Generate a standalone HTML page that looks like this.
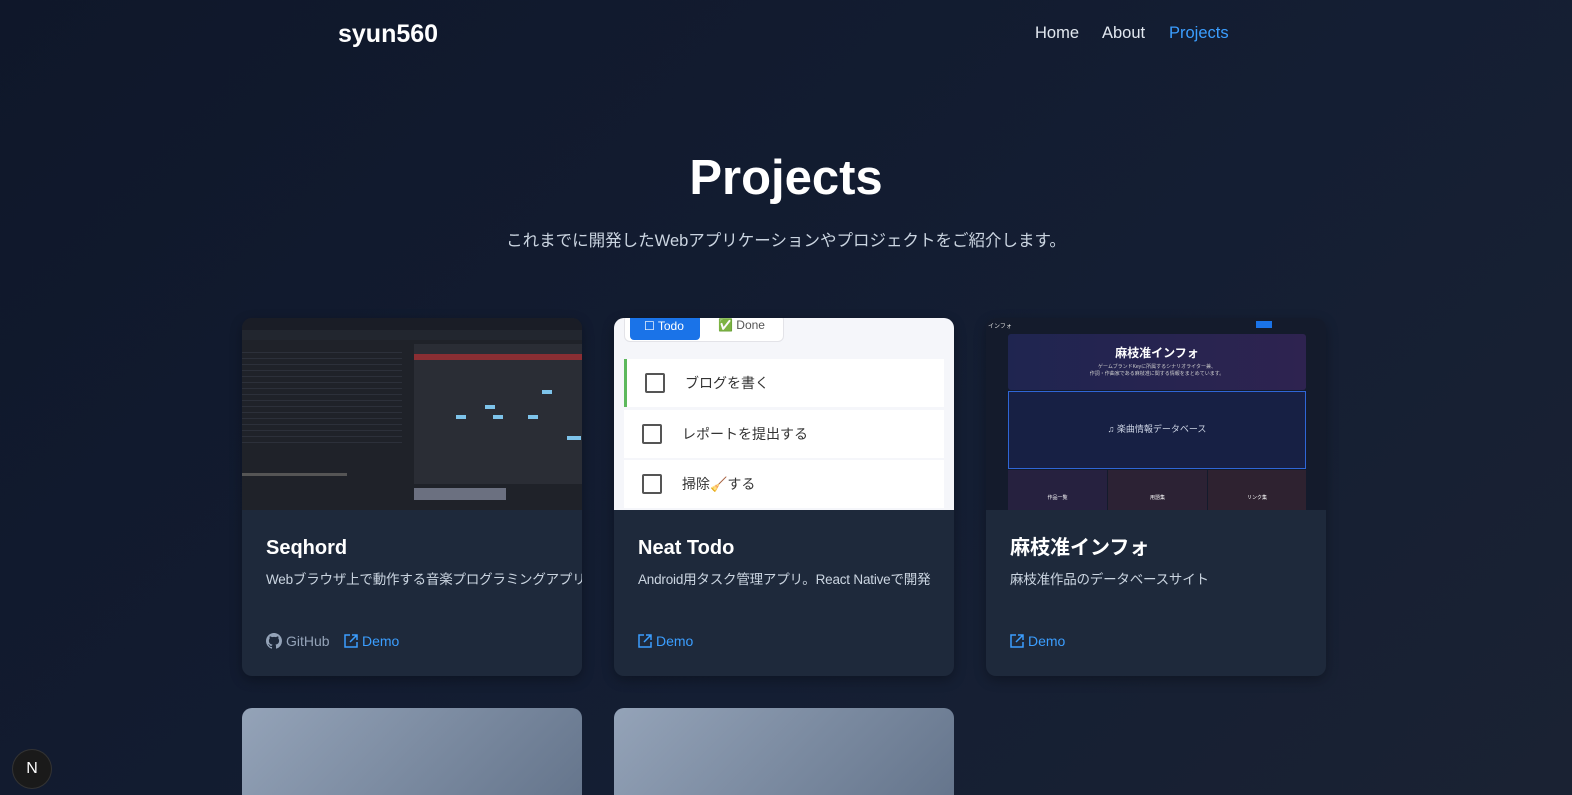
<!DOCTYPE html>
<html><head><meta charset="utf-8"><style>
*{margin:0;padding:0;box-sizing:border-box}
html,body{width:1572px;height:795px;overflow:hidden}
body{background:linear-gradient(135deg,#0f172a 0%,#141e33 60%,#1a2233 100%);font-family:"Liberation Sans","Noto Sans CJK JP",sans-serif;color:#fff;position:relative}
.logo{position:absolute;left:338px;top:20px;font-size:25px;font-weight:bold}
.nav{position:absolute;top:24px;font-size:16.5px;color:#e2e8f0}
h1{position:absolute;left:0;width:1572px;text-align:center;top:150px;font-size:49px;font-weight:bold}
.sub{position:absolute;left:0;width:1572px;text-align:center;top:229px;font-size:16.5px;color:#cbd5e1;line-height:24px}
.card{position:absolute;width:340px;height:358px;top:318px;background:#1e293b;border-radius:10px;overflow:hidden;box-shadow:0 4px 12px rgba(0,0,0,.3)}
.img{height:192px;position:relative;overflow:hidden}
.ct{position:absolute;left:24px;top:217px;font-size:20px;font-weight:bold;line-height:26px}
.cd{position:absolute;left:24px;top:252px;font-size:13.5px;color:#cbd5e1;white-space:nowrap;line-height:20px;letter-spacing:-0.2px}
.lk{position:absolute;top:315px;font-size:14px;color:#3b9eff;display:flex;align-items:center;gap:4px}
.gh{color:#94a3b8}
.card2{position:absolute;top:708px;width:340px;height:100px;border-radius:10px;background:linear-gradient(135deg,#94a3b8,#64748b)}
.todo-row{position:absolute;left:10px;right:10px;height:48px;background:#fff;display:flex;align-items:center;font-size:14px;color:#333}
.cb{width:20px;height:20px;border:2px solid #555;border-radius:2px;margin-left:18px;margin-right:20px}
</style></head><body>
<div class="logo">syun560</div>
<div class="nav" style="left:1035px">Home</div>
<div class="nav" style="left:1102px">About</div>
<div class="nav" style="left:1169px;color:#3b9eff">Projects</div>
<h1>Projects</h1>
<div class="sub">これまでに開発したWebアプリケーションやプロジェクトをご紹介します。</div>

<div class="card" style="left:242px">
 <div class="img" style="background:#1f2229">
  <div style="position:absolute;left:0;top:0;width:341px;height:12px;background:#1a1d26"></div>
  <div style="position:absolute;left:0;top:12px;width:341px;height:10px;background:#22262f"></div>
  <div style="position:absolute;left:172px;top:26px;width:169px;height:140px;background:#2a2d35"></div>
  <div style="position:absolute;left:172px;top:36px;width:169px;height:6px;background:#8a2e33"></div>
  <div style="position:absolute;left:172px;top:170px;width:92px;height:12px;background:#6b7080"></div>
  <div style="position:absolute;left:0;top:155px;width:105px;height:3px;background:#555"></div>
  <div style="position:absolute;left:0;top:30px;width:160px;height:100px;background:repeating-linear-gradient(#1f2229 0 4px,#3a3f4a 4px 5px,#1f2229 5px 6px);opacity:.5"></div>
  <div style="position:absolute;left:214px;top:97px;width:10px;height:4px;background:#7dc3ea"></div>
  <div style="position:absolute;left:251px;top:97px;width:10px;height:4px;background:#7dc3ea"></div>
  <div style="position:absolute;left:286px;top:97px;width:10px;height:4px;background:#7dc3ea"></div>
  <div style="position:absolute;left:300px;top:72px;width:10px;height:4px;background:#7dc3ea"></div>
  <div style="position:absolute;left:243px;top:87px;width:10px;height:4px;background:#7dc3ea"></div>
  <div style="position:absolute;left:325px;top:118px;width:14px;height:4px;background:#7dc3ea"></div>
 </div>
 <div class="ct">Seqhord</div>
 <div class="cd">Webブラウザ上で動作する音楽プログラミングアプリ</div>
 <div class="lk gh" style="left:24px"><svg width="16" height="16" viewBox="0 0 16 16" fill="#94a3b8"><path d="M8 0C3.58 0 0 3.58 0 8c0 3.54 2.29 6.530 5.47 7.59.4.07.55-.17.55-.38v-1.33c-2.23.48-2.7-1.07-2.7-1.07-.36-.92-.89-1.170-.89-1.17-.73-.5.05-.49.05-.49.8.06 1.23.83 1.23.83.71 1.22 1.87.87 2.33.66.07-.52.28-.87.5-1.07-1.78-.2-3.64-.89-3.640-3.950 0-.87.31-1.59.82-2.15-.08-.2-.36-1.02.08-2.12 0 0 .67-.21 2.2.82a7.6 7.6 0 0 1 4 0c1.53-1.04 2.2-.82 2.2-.82.44 1.1.16 1.92.08 2.12.51.56.82 1.27.82 2.15 0 3.07-1.87 3.75-3.65 3.95.29.25.54.73.54 1.48v2.2c0 .21.15.46.55.38A8 8 0 0 0 16 8c0-4.42-3.58-8-8-8z"/></svg>GitHub</div>
 <div class="lk" style="left:102px"><svg width="14" height="14" viewBox="0 0 14 14" fill="none" stroke="#3b9eff" stroke-width="1.5"><path d="M6 1H1v12h12V8M8 1h5v5M13 1L6 8"/></svg>Demo</div>
</div>

<div class="card" style="left:614px">
 <div class="img" style="background:#f5f6fa">
  <div style="position:absolute;left:10px;top:-4px;width:160px;height:28px;background:#fff;border:1px solid #e3e3e8;border-radius:6px"></div>
  <div style="position:absolute;left:16px;top:-4px;width:70px;height:26px;background:#1a73e8;border-radius:4px;color:#fff;font-size:12px;padding:5px 0 0 14px">☐ Todo</div>
  <div style="position:absolute;left:104px;top:0;font-size:12px;color:#555">✅ Done</div>
  <div class="todo-row" style="top:41px;border-left:3px solid #5cb85c"><div class="cb"></div>ブログを書く</div>
  <div class="todo-row" style="top:92px"><div class="cb"></div>レポートを提出する</div>
  <div class="todo-row" style="top:142px"><div class="cb"></div>掃除🧹する</div>
 </div>
 <div class="ct">Neat Todo</div>
 <div class="cd">Android用タスク管理アプリ。React Nativeで開発</div>
 <div class="lk" style="left:24px"><svg width="14" height="14" viewBox="0 0 14 14" fill="none" stroke="#3b9eff" stroke-width="1.5"><path d="M6 1H1v12h12V8M8 1h5v5M13 1L6 8"/></svg>Demo</div>
</div>

<div class="card" style="left:986px">
 <div class="img" style="background:#141b2c">
  <div style="position:absolute;left:2px;top:3px;font-size:6px;color:#ddd">インフォ</div>
  <div style="position:absolute;left:270px;top:3px;width:16px;height:7px;background:#1a73e8"></div>
  <div style="position:absolute;left:22px;top:16px;width:298px;height:56px;background:linear-gradient(90deg,#1f2550,#2e2350);border-radius:3px"></div>
  <div style="position:absolute;left:22px;top:26px;width:298px;text-align:center;font-size:12px;font-weight:bold">麻枝准インフォ</div>
  <div style="position:absolute;left:22px;top:46px;width:298px;text-align:center;font-size:5px;color:#ccc;line-height:7px">ゲームブランドKeyに所属するシナリオライター兼、<br>作詞・作曲家である麻枝准に関する情報をまとめています。</div>
  <div style="position:absolute;left:22px;top:73px;width:298px;height:78px;background:#172044;border:1px solid #2f66d6"></div>
  <div style="position:absolute;left:22px;top:104px;width:298px;text-align:center;font-size:9px;color:#cfd6e6">♫ 楽曲情報データベース</div>
  <div style="position:absolute;left:22px;top:152px;width:99px;height:40px;background:#26213f;font-size:5px;text-align:center;padding-top:24px">作品一覧</div>
  <div style="position:absolute;left:122px;top:152px;width:99px;height:40px;background:#2c2234;font-size:5px;text-align:center;padding-top:24px">用語集</div>
  <div style="position:absolute;left:222px;top:152px;width:98px;height:40px;background:#2e2230;font-size:5px;text-align:center;padding-top:24px">リンク集</div>
 </div>
 <div class="ct">麻枝准インフォ</div>
 <div class="cd">麻枝准作品のデータベースサイト</div>
 <div class="lk" style="left:24px"><svg width="14" height="14" viewBox="0 0 14 14" fill="none" stroke="#3b9eff" stroke-width="1.5"><path d="M6 1H1v12h12V8M8 1h5v5M13 1L6 8"/></svg>Demo</div>
</div>

<div class="card2" style="left:242px"></div>
<div class="card2" style="left:614px"></div>
<div style="position:absolute;left:13px;top:750px;width:38px;height:38px;border-radius:50%;background:#1a1a1a;color:#fff;font-size:16px;text-align:center;line-height:38px;box-shadow:0 0 0 1px #333">N</div>
</body></html>
